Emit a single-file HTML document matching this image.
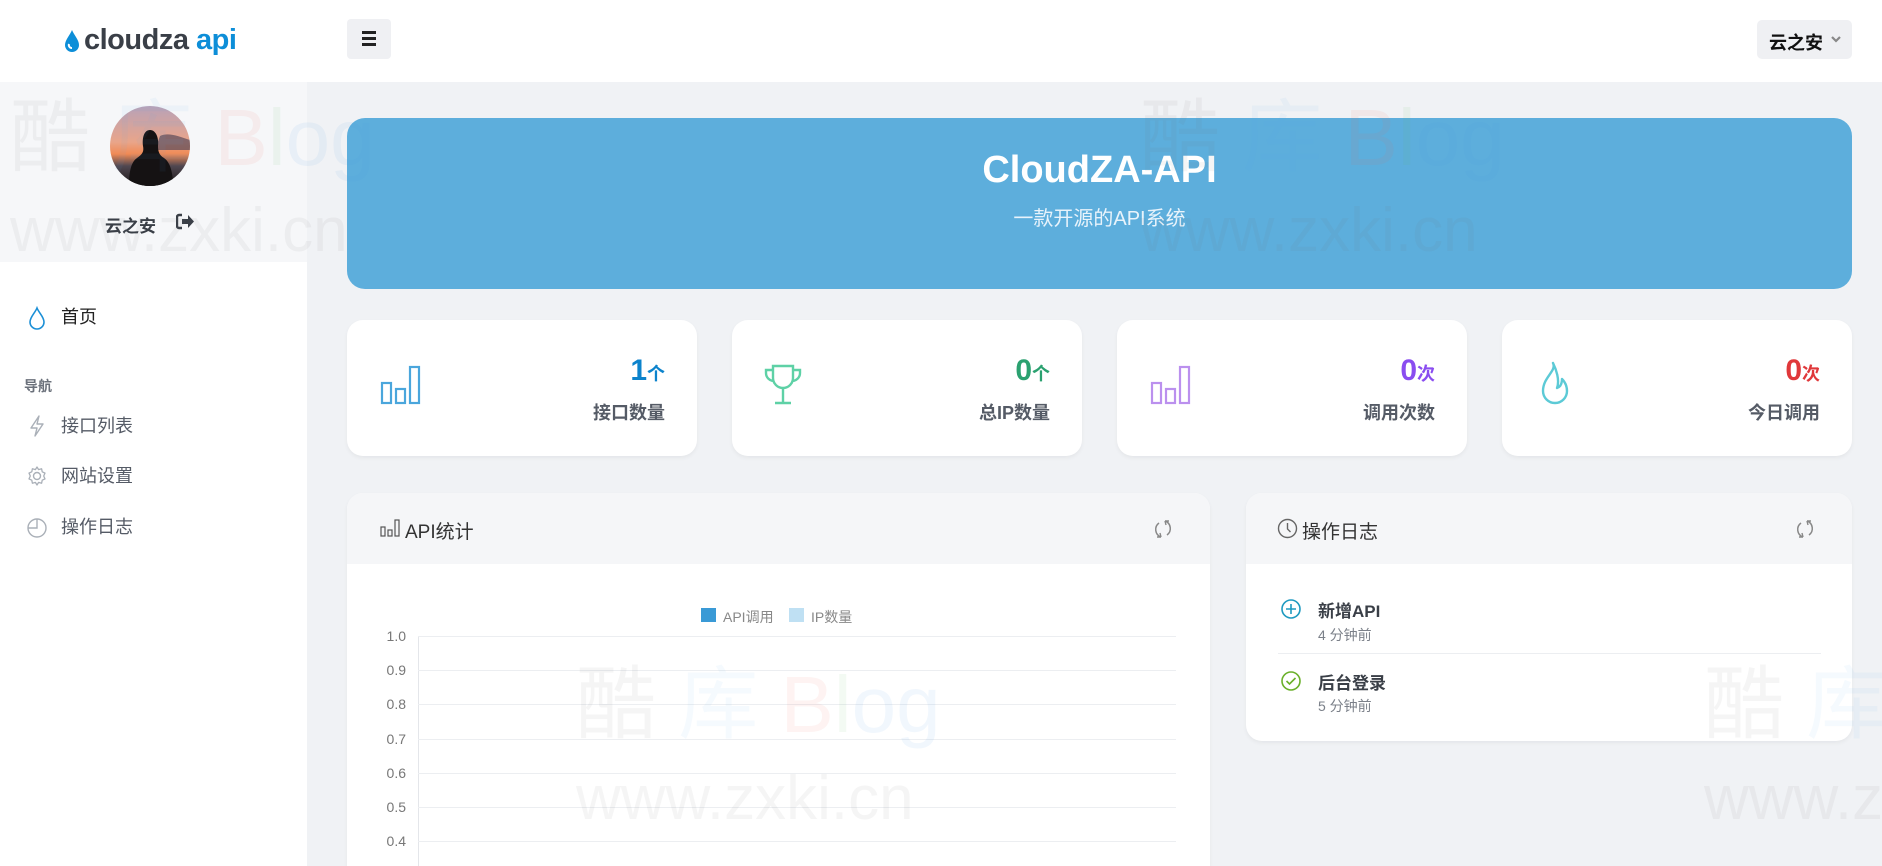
<!DOCTYPE html>
<html style="overflow:hidden;width:1882px;height:866px"><head><meta charset="utf-8"><style>
*{margin:0;padding:0;box-sizing:border-box}
body{width:1882px;height:866px;overflow:hidden;background:#f0f2f5;font-family:"Liberation Sans","Noto Sans CJK SC",sans-serif;position:relative;color:#333}
.a{position:absolute}
.wm{position:absolute;color:rgba(120,120,120,0.07);font-family:"Liberation Sans","Noto Sans CJK SC",sans-serif;white-space:nowrap;line-height:1;z-index:50;pointer-events:none}
.card{position:absolute;background:#fff;border-radius:16px;box-shadow:0 2px 4px rgba(0,0,0,0.05)}
.num{position:absolute;right:32px;top:36px;font-size:30px;font-weight:bold;line-height:1}
.num small{font-size:18px}
.lbl{position:absolute;right:32px;top:79px;font-size:18px;font-weight:bold;color:#555b66}
.menu{position:absolute;left:61px;font-size:18px;color:#555b66;line-height:1}
.ic{position:absolute;left:26px}
.yl{position:absolute;left:370px;width:36px;text-align:right;font-size:14px;color:#777;line-height:1}
.gl{position:absolute;left:418px;width:758px;height:1px;background:#eceef1}
</style></head><body>
<div class="a" style="left:0;top:0;width:1882px;height:82px;background:#fff"></div>
<svg class="a" style="left:64px;top:29px" width="16" height="24" viewBox="0 0 16 24"><path d="M8 1C6 6 1 11 1 16a7 7 0 0 0 14 0C15 11 10 6 8 1z" fill="#0d8ed8"/><path d="M5 15a3 3 0 0 0 3 4" stroke="#fff" stroke-width="2" fill="none"/></svg>
<div class="a" style="left:84px;top:26px;font-size:29px;font-weight:bold;line-height:1;letter-spacing:-0.5px"><span style="color:#3a3f47">cloudza</span> <span style="color:#0d8ed8">api</span></div>
<div class="a" style="left:347px;top:19px;width:44px;height:40px;background:#eff0f3;border-radius:4px"></div>
<div class="a" style="left:362px;top:31px;width:14px;height:3px;background:#222;box-shadow:0 6px 0 #222,0 12px 0 #222"></div>
<div class="a" style="left:1757px;top:20px;width:95px;height:39px;background:#eff0f3;border-radius:5px"></div>
<div class="a" style="left:1769px;top:29px;font-size:18px;font-weight:bold;color:#111">云之安</div>
<svg class="a" style="left:1830px;top:34px" width="12" height="10" viewBox="0 0 12 10"><path d="M2 3l4 4 4-4" stroke="#888" stroke-width="2.2" fill="none"/></svg>
<div class="a" style="left:0;top:82px;width:307px;height:784px;background:#fff"></div>
<div class="a" style="left:0;top:82px;width:307px;height:180px;background:#f6f7f9"></div>
<svg class="a" style="left:110px;top:106px" width="80" height="80" viewBox="0 0 80 80"><defs><linearGradient id="sky" x1="0" y1="0" x2="0" y2="1"><stop offset="0" stop-color="#b8a2b8"/><stop offset="0.45" stop-color="#e9a58a"/><stop offset="0.6" stop-color="#f08a55"/><stop offset="0.75" stop-color="#504750"/><stop offset="1" stop-color="#1b1718"/></linearGradient><clipPath id="c"><circle cx="40" cy="40" r="40"/></clipPath></defs><g clip-path="url(#c)"><rect width="80" height="80" fill="url(#sky)"/><path d="M50 30c8-4 18 0 30 4v10H45z" fill="#5a4a5a" opacity=".7"/><path d="M40 24c-6 0-8 8-7 16 1 5 0 8-6 12-6 4-8 14-8 28h44c0-14-3-24-9-28-5-3-6-7-6-12 1-8-2-16-8-16z" fill="#151213"/></g></svg>
<div class="a" style="left:105px;top:212px;font-size:17px;font-weight:bold;color:#3a3f47">云之安</div>
<svg class="a" style="left:176px;top:213px" width="19" height="17" viewBox="0 0 19 17"><path d="M6 2H3a2 2 0 0 0-2 2v9a2 2 0 0 0 2 2h3" stroke="#3a3f47" stroke-width="2.4" fill="none"/><path d="M6 6h6V2l6 6.5-6 6.5v-4H6z" fill="#3a3f47"/></svg>
<svg class="ic" style="top:306px" width="22" height="24" viewBox="0 0 22 24"><path d="M11 2C9 7 4 11 4 16a7 7 0 0 0 14 0C18 11 13 7 11 2z" stroke="#1b8fd6" stroke-width="1.6" fill="none"/></svg>
<div class="menu" style="top:308px;color:#222">首页</div>
<div class="a" style="left:24px;top:376px;font-size:14px;font-weight:bold;color:#6b717b">导航</div>
<svg class="ic" style="top:414px" width="22" height="24" viewBox="0 0 22 24"><path d="M13 2L5 14h6l-2 8 8-12h-6z" stroke="#aab0b8" stroke-width="1.4" fill="none" stroke-linejoin="round"/></svg>
<div class="menu" style="top:417px">接口列表</div>
<svg class="ic" style="top:465px" width="22" height="22" viewBox="0 0 22 22"><circle cx="11" cy="11" r="3.5" stroke="#aab0b8" stroke-width="1.4" fill="none"/><path d="M11 2l1.6 2.6 3-.8.6 3 2.8 1.3-1.3 2.9 1.3 2.9-2.8 1.3-.6 3-3-.8L11 20l-1.6-2.6-3 .8-.6-3-2.8-1.3L4.3 11 3 8.1l2.8-1.3.6-3 3 .8z" stroke="#aab0b8" stroke-width="1.3" fill="none" stroke-linejoin="round"/></svg>
<div class="menu" style="top:467px">网站设置</div>
<svg class="ic" style="top:515px" width="22" height="24" viewBox="0 0 22 24"><circle cx="11" cy="13" r="9" stroke="#aab0b8" stroke-width="1.4" fill="none"/><path d="M11 4v9H2" stroke="#aab0b8" stroke-width="1.4" fill="none"/></svg>
<div class="menu" style="top:518px">操作日志</div>
<div class="a" style="left:347px;top:118px;width:1505px;height:171px;background:#5daedc;border-radius:18px"></div>
<div class="a" style="left:347px;top:151px;width:1505px;text-align:center;font-size:38px;font-weight:bold;color:#fff;line-height:1">CloudZA-API</div>
<div class="a" style="left:347px;top:209px;width:1505px;text-align:center;font-size:20px;color:#e8f3fb;line-height:1">一款开源的API系统</div>
<div class="card" style="left:347px;top:320px;width:350px;height:136px">
<svg class="a" style="left:33px;top:43px" width="42" height="42" viewBox="0 0 42 42"><rect x="2" y="20" width="9" height="20" stroke="#4aa6dc" stroke-width="2.2" fill="none"/><rect x="16" y="26" width="9" height="14" stroke="#4aa6dc" stroke-width="2.2" fill="none"/><rect x="30" y="4" width="9" height="36" stroke="#4aa6dc" stroke-width="2.2" fill="none"/></svg>
<div class="num" style="color:#0c83cc">1<small>个</small></div><div class="lbl">接口数量</div></div>
<div class="card" style="left:732px;top:320px;width:350px;height:136px">
<svg class="a" style="left:30px;top:42px" width="42" height="46" viewBox="0 0 42 46"><path d="M11 4h20v12a10 10 0 0 1-20 0z" stroke="#5ed1a6" stroke-width="2.4" fill="none"/><path d="M11 8H4v3a8 8 0 0 0 8 8M31 8h7v3a8 8 0 0 1-8 8M21 26v14M13 41h16" stroke="#5ed1a6" stroke-width="2.4" fill="none"/></svg>
<div class="num" style="color:#2ba170">0<small>个</small></div><div class="lbl">总IP数量</div></div>
<div class="card" style="left:1117px;top:320px;width:350px;height:136px">
<svg class="a" style="left:33px;top:43px" width="42" height="42" viewBox="0 0 42 42"><rect x="2" y="20" width="9" height="20" stroke="#bb90ee" stroke-width="2.2" fill="none"/><rect x="16" y="26" width="9" height="14" stroke="#bb90ee" stroke-width="2.2" fill="none"/><rect x="30" y="4" width="9" height="36" stroke="#bb90ee" stroke-width="2.2" fill="none"/></svg>
<div class="num" style="color:#8a4df0">0<small>次</small></div><div class="lbl">调用次数</div></div>
<div class="card" style="left:1502px;top:320px;width:350px;height:136px">
<svg class="a" style="left:35px;top:40px" width="36" height="48" viewBox="0 0 36 48"><path d="M16 3c4 8-10 14-10 28a12 12 0 0 0 24 0c0-6-3-10-5-12 0 5-2 8-5 9 3-8-1-19-4-25z" stroke="#5ccad6" stroke-width="2.4" fill="none" stroke-linejoin="round"/></svg>
<div class="num" style="color:#e0383a">0<small>次</small></div><div class="lbl">今日调用</div></div>
<div class="card" style="left:347px;top:493px;width:863px;height:373px;overflow:hidden;border-radius:16px 16px 0 0">
<div class="a" style="left:0;top:0;width:863px;height:71px;background:#f5f6f8"></div>
<svg class="a" style="left:33px;top:26px" width="20" height="18" viewBox="0 0 20 18"><rect x="1" y="8" width="4" height="9" stroke="#555" stroke-width="1.2" fill="none"/><rect x="8" y="11" width="4" height="6" stroke="#555" stroke-width="1.2" fill="none"/><rect x="15" y="1" width="4" height="16" stroke="#555" stroke-width="1.2" fill="none"/></svg>
<div class="a" style="left:58px;top:24px;font-size:19px;color:#333">API统计</div>
<svg class="a" style="left:805px;top:25px" width="22" height="22" viewBox="0 0 22 22"><path d="M7 5a8 8 0 0 0 2 14M15 17a8 8 0 0 0-2-14" stroke="#888" stroke-width="1.5" fill="none"/><path d="M9 19l-1-4M9 19l-4 0M13 3l1 4M13 3l4 0" stroke="#888" stroke-width="1.4" fill="none"/></svg>
</div>
<div class="a" style="left:701px;top:608px;width:15px;height:14px;background:#3a9ad6"></div>
<div class="a" style="left:723px;top:607px;font-size:14px;color:#888">API调用</div>
<div class="a" style="left:789px;top:608px;width:15px;height:14px;background:#bfe0f3"></div>
<div class="a" style="left:811px;top:607px;font-size:14px;color:#888">IP数量</div>
<div class="a" style="left:418px;top:636px;width:1px;height:230px;background:#e4e6ea"></div>
<div class="gl" style="top:636px"></div><div class="yl" style="top:629px">1.0</div>
<div class="gl" style="top:670px"></div><div class="yl" style="top:663px">0.9</div>
<div class="gl" style="top:704px"></div><div class="yl" style="top:697px">0.8</div>
<div class="gl" style="top:739px"></div><div class="yl" style="top:732px">0.7</div>
<div class="gl" style="top:773px"></div><div class="yl" style="top:766px">0.6</div>
<div class="gl" style="top:807px"></div><div class="yl" style="top:800px">0.5</div>
<div class="gl" style="top:841px"></div><div class="yl" style="top:834px">0.4</div>
<div class="card" style="left:1246px;top:493px;width:606px;height:248px;overflow:hidden">
<div class="a" style="left:0;top:0;width:606px;height:71px;background:#f5f6f8"></div>
<svg class="a" style="left:31px;top:25px" width="21" height="21" viewBox="0 0 21 21"><circle cx="10.5" cy="10.5" r="9" stroke="#666" stroke-width="1.4" fill="none"/><path d="M10.5 5v6l3 3" stroke="#666" stroke-width="1.4" fill="none"/></svg>
<div class="a" style="left:56px;top:24px;font-size:19px;color:#333">操作日志</div>
<svg class="a" style="left:548px;top:25px" width="22" height="22" viewBox="0 0 22 22"><path d="M7 5a8 8 0 0 0 2 14M15 17a8 8 0 0 0-2-14" stroke="#888" stroke-width="1.5" fill="none"/><path d="M9 19l-1-4M9 19l-4 0M13 3l1 4M13 3l4 0" stroke="#888" stroke-width="1.4" fill="none"/></svg>
<svg class="a" style="left:34px;top:105px" width="22" height="22" viewBox="0 0 22 22"><circle cx="11" cy="11" r="9" stroke="#1f9ac0" stroke-width="1.6" fill="none"/><path d="M11 6v10M6 11h10" stroke="#1f9ac0" stroke-width="1.6"/></svg>
<div class="a" style="left:72px;top:104px;font-size:17px;font-weight:bold;color:#3a3f47">新增API</div>
<div class="a" style="left:72px;top:132px;font-size:14px;color:#7b8089">4 分钟前</div>
<div class="a" style="left:32px;top:160px;width:543px;height:1px;background:#eceef1"></div>
<svg class="a" style="left:34px;top:177px" width="22" height="22" viewBox="0 0 22 22"><circle cx="11" cy="11" r="9" stroke="#6ab02a" stroke-width="1.6" fill="none"/><path d="M6.5 11l3 3 6-6" stroke="#6ab02a" stroke-width="1.6" fill="none"/></svg>
<div class="a" style="left:72px;top:176px;font-size:17px;font-weight:bold;color:#3a3f47">后台登录</div>
<div class="a" style="left:72px;top:203px;font-size:14px;color:#7b8089">5 分钟前</div>
</div>
<div class="wm" style="left:10px;top:98px;font-size:80px">酷 <span style="color:rgba(80,170,240,0.06)">库</span> <span style="color:rgba(240,100,90,0.08)">B</span><span style="color:rgba(100,190,100,0.08)">l</span><span style="color:rgba(80,150,230,0.08)">og</span></div>
<div class="wm" style="left:10px;top:200px;font-size:62px">www.zxki.cn</div>
<div class="wm" style="left:1140px;top:98px;font-size:80px">酷 <span style="color:rgba(80,170,240,0.06)">库</span> <span style="color:rgba(240,100,90,0.08)">B</span><span style="color:rgba(100,190,100,0.08)">l</span><span style="color:rgba(80,150,230,0.08)">og</span></div>
<div class="wm" style="left:1140px;top:200px;font-size:62px">www.zxki.cn</div>
<div class="wm" style="left:576px;top:665px;font-size:80px">酷 <span style="color:rgba(80,170,240,0.06)">库</span> <span style="color:rgba(240,100,90,0.08)">B</span><span style="color:rgba(100,190,100,0.08)">l</span><span style="color:rgba(80,150,230,0.08)">og</span></div>
<div class="wm" style="left:576px;top:768px;font-size:62px">www.zxki.cn</div>
<div class="wm" style="left:1704px;top:665px;font-size:80px">酷 <span style="color:rgba(80,170,240,0.06)">库</span></div>
<div class="wm" style="left:1704px;top:768px;font-size:62px">www.z</div>
</body></html>
